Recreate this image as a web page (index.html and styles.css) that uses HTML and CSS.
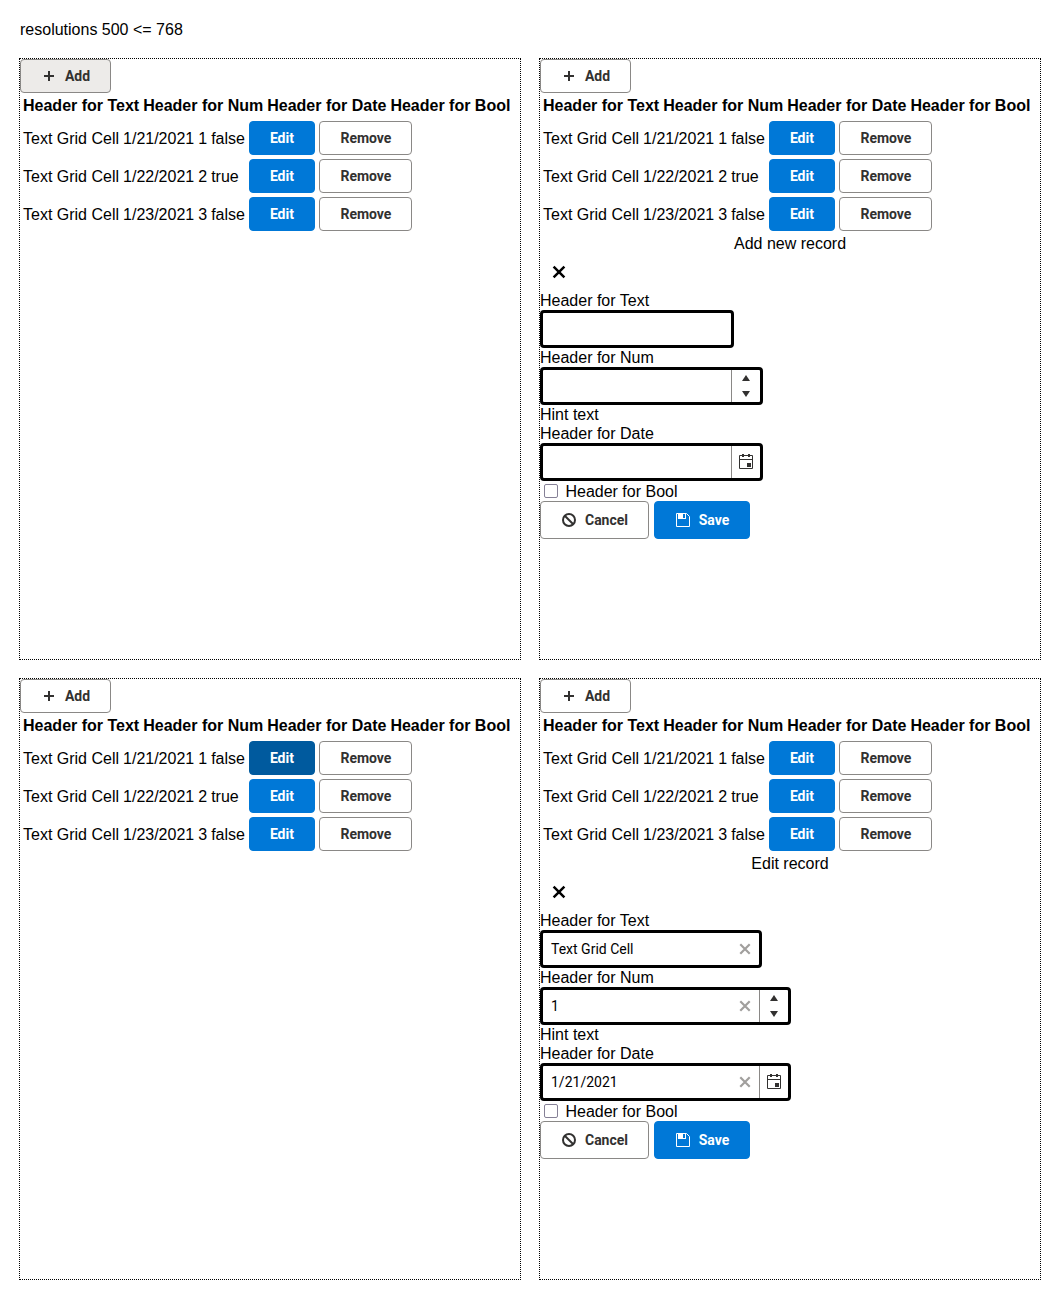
FILE: index.html
```html
<!DOCTYPE html>
<html lang="en">
<head>
<meta charset="utf-8">
<title>Grid editing</title>
<link rel="stylesheet" href="styles.css">
</head>
<body>
<svg class="sprite" aria-hidden="true">
  <symbol id="plus" viewBox="0 0 16 16"><path d="M7 3h2v4h4v2H9v4H7V9H3V7h4z" fill="currentColor"/></symbol>
  <symbol id="close" viewBox="0 0 16 16"><path d="M2.600 2.600l10.800 10.800M13.400 2.600l-10.800 10.800" fill="none" stroke="currentColor" stroke-width="2.500"/></symbol>
  <symbol id="cancel" viewBox="0 0 16 16"><circle cx="8" cy="8" r="6" fill="none" stroke="currentColor" stroke-width="2"/><path d="M4 4l8 8" stroke="currentColor" stroke-width="2"/></symbol>
  <symbol id="save" viewBox="0 0 16 16"><path d="M1.500 1.500h10l3 3v10h-13z" fill="none" stroke="currentColor"/><path d="M3 1h8v6H3zM8 2v4h2V2z" fill="currentColor" fill-rule="evenodd"/></symbol>
  <symbol id="calendar" viewBox="0 0 16 16"><path d="M1.500 1.500h13v13h-13zM1 5.500h14" fill="none" stroke="currentColor"/><path d="M4 0h2v3H4zM10 0h2v3h-2zM9 9h4v4H9z" fill="currentColor"/></symbol>
</svg>
<p class="caption">resolutions 500 &lt;= 768</p>
<main class="board"></main>
<script src="app.js"></script>
</body>
</html>
```
FILE: styles.css
```css
* { box-sizing: border-box; }
body { margin: 0; background: #fff; color: #000; font: 16px/19px "Liberation Sans", Arial, sans-serif; }
.sprite { display: none; }
.caption { margin: 0; padding: 20px 20px 0; height: 58px; }
.board { display: grid; grid-template-columns: 502px 502px; grid-auto-rows: 602px; gap: 18px; padding-left: 19px; }
.panel { border: 1px dotted #000; display: flex; flex-direction: column; align-items: flex-start; }
.btn { display: inline-flex; align-items: center; justify-content: center; height: 34px; padding: 0; border: 1px solid #8a8886; border-radius: 4px; background: #fff; color: #323130; font: bold 14px/20px Roboto, sans-serif; }
.btn svg { width: 16px; height: 16px; margin-right: 8px; }
.add { width: 91px; }
.edit { width: 66px; }
.remove { width: 93px; padding-left: 1px; }
.hovered { background: #edebe9; }
.primary { background: #0078d7; border-color: #0078d7; color: #fff; }
.pressed { background: #005a9e; border-color: #005a9e; }
.head, .rows { border-spacing: 2px; }
.head { height: 25px; }
.head th, .rows td { padding: 1px; white-space: nowrap; text-align: left; }
.rows td { height: 36px; }
.rows .btn { display: flex; }
.form { width: 100%; }
.title { text-align: center; }
.close { display: flex; align-items: center; justify-content: center; width: 38px; height: 38px; padding: 0; border: 0; background: none; color: #000; }
.close svg { width: 16px; height: 16px; }
.field { display: flex; align-items: stretch; width: 223px; height: 38px; border: 3px solid #000; border-radius: 4px; background: #fff; font: 14px/20px Roboto, sans-serif; }
.field.text { width: 194px; }
.filled .field { width: 251px; }
.filled .field.text { width: 222px; }
.value { flex: 1; padding: 6px 8px; }
.clear { display: flex; align-items: center; justify-content: center; width: 28px; color: #a19f9d; }
.clear svg { width: 14px; height: 14px; }
.side { display: flex; flex-direction: column; align-items: center; justify-content: center; width: 29px; border-left: 1px solid #8a8886; color: #323130; }
.side svg { width: 16px; height: 16px; }
.spin { gap: 10px; }
.up, .down { border: 4px solid transparent; border-top: 0; border-bottom: 6px solid #323130; }
.down { transform: rotate(180deg); }
.check { display: flex; align-items: center; height: 20px; padding-left: 4px; }
.box { width: 14px; height: 14px; margin-right: 7.45px; border: 1px solid #858096; border-radius: 2px; }
.actions { display: flex; gap: 5px; }
.actions .btn { height: 38px; }
.cancel { width: 109px; }
.save { width: 96px; }
```
FILE: app.js
```js
const icon = name => `<svg><use href="#${name}"/></svg>`;
const records = [["1/21/2021", 1, false], ["1/22/2021", 2, true], ["1/23/2021", 3, false]];

const input = (kind, value, side = "") => `<div class="field ${kind}">
  <span class="value">${value}</span>
  ${value ? `<span class="clear">${icon("close")}</span>` : ""}${side}</div>`;

const form = ({ title, values }) => `<div class="form ${values[0] ? "filled" : ""}">
  <div class="title">${title}</div>
  <button class="close" aria-label="Close">${icon("close")}</button>
  <div>Header for Text</div>${input("text", values[0])}
  <div>Header for Num</div>${input("num", values[1], '<span class="side spin"><i class="up"></i><i class="down"></i></span>')}
  <div>Hint text</div>
  <div>Header for Date</div>${input("date", values[2], `<span class="side">${icon("calendar")}</span>`)}
  <label class="check"><span class="box"></span>Header for Bool</label>
  <div class="actions">
    <button class="btn cancel">${icon("cancel")}Cancel</button>
    <button class="btn primary save">${icon("save")}Save</button>
  </div></div>`;

const panel = ({ add = "", edit = "", editor }) => `<section class="panel">
  <button class="btn add ${add}">${icon("plus")}Add</button>
  <table class="head"><tr>${["Text", "Num", "Date", "Bool"].map(h => `<th>Header for ${h}</th>`).join("")}</tr></table>
  <table class="rows">${records.map(([date, num, flag], i) => `<tr>
    <td>Text Grid Cell</td><td>${date}</td><td>${num}</td><td>${flag}</td>
    <td><button class="btn primary edit ${i ? "" : edit}">Edit</button></td>
    <td><button class="btn remove">Remove</button></td></tr>`).join("")}</table>
  ${editor ? form(editor) : ""}</section>`;

document.querySelector(".board").innerHTML = [
  { add: "hovered" },
  { editor: { title: "Add new record", values: ["", "", ""] } },
  { edit: "pressed" },
  { editor: { title: "Edit record", values: ["Text Grid Cell", "1", "1/21/2021"] } }
].map(panel).join("");
```
